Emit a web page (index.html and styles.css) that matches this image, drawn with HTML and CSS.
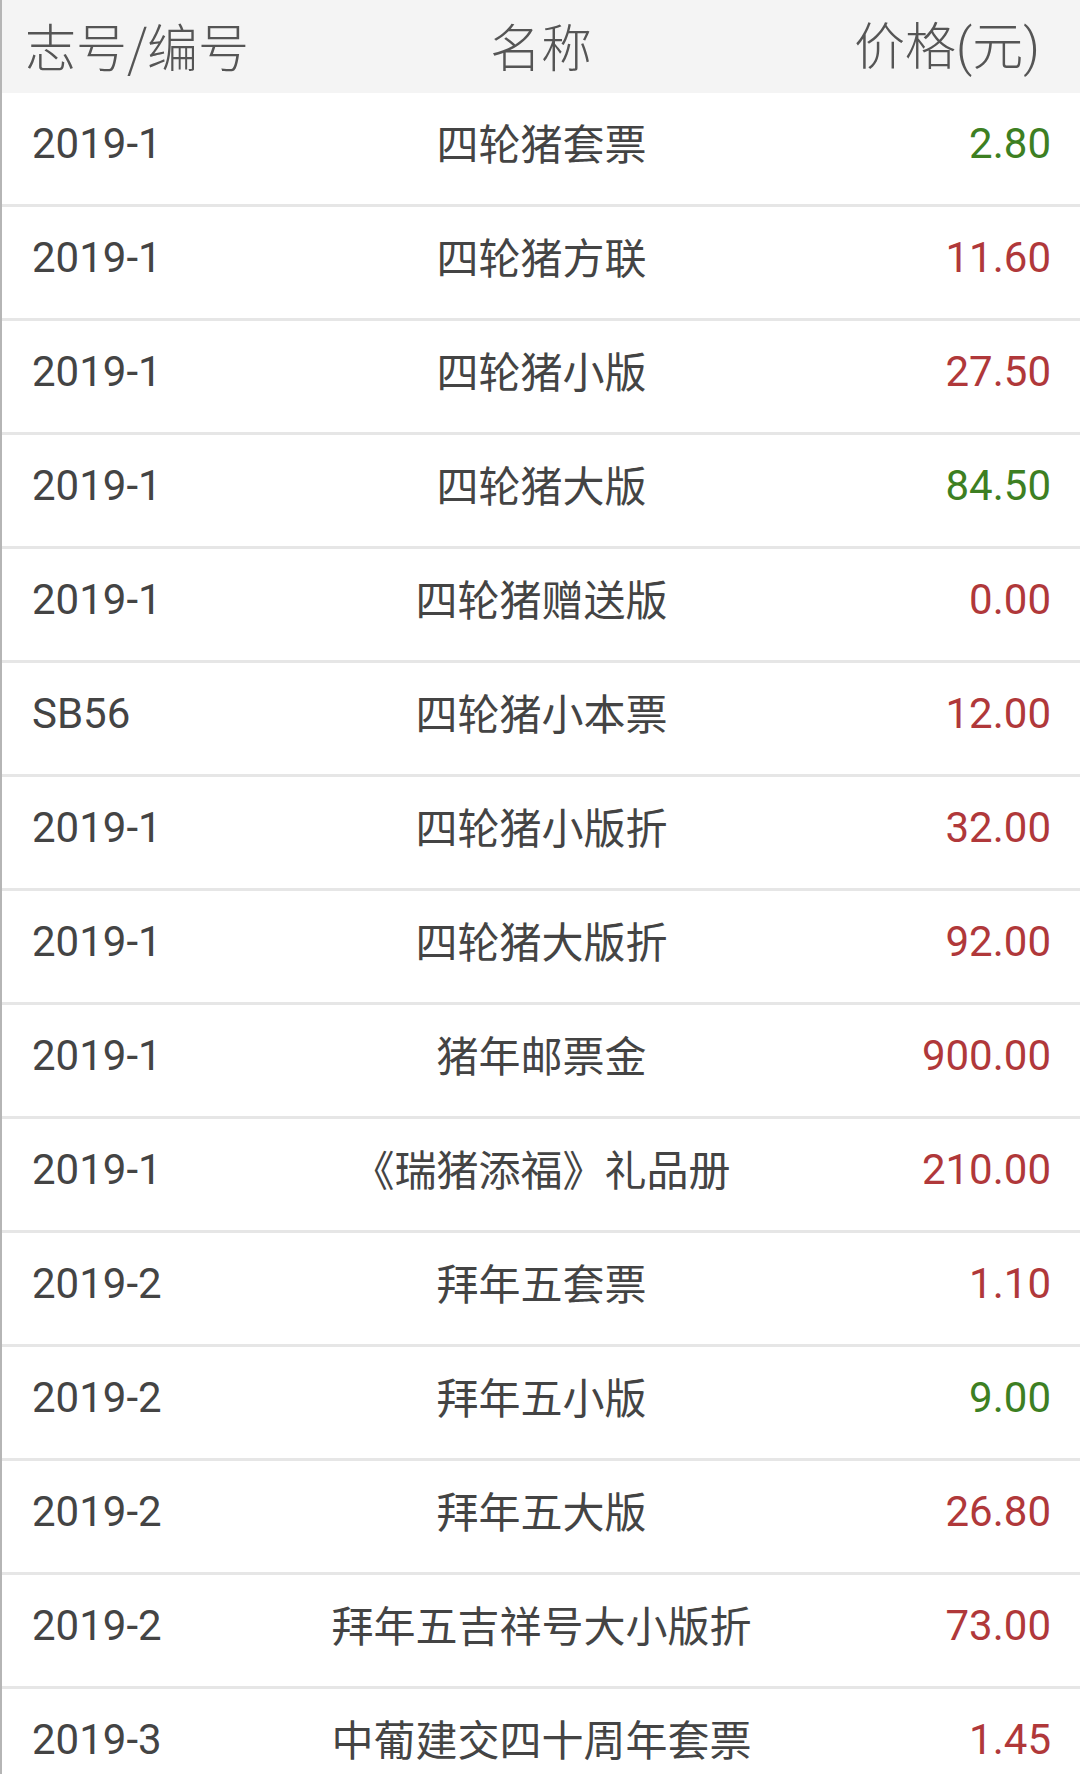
FILE: index.html
```html
<!DOCTYPE html>
<html lang="zh">
<head>
<meta charset="utf-8">
<link rel="stylesheet" href="styles.css">
</head>
<body>
<div class="table">
  <div class="head">
    <div class="c1">志号/编号</div>
    <div class="c2">名称</div>
    <div class="c3">价格<span class="paren">(</span>元<span class="paren">)</span></div>
  </div>
  <div class="row"><div class="c1">2019-1</div><div class="c2">四轮猪套票</div><div class="c3 green">2.80</div></div>
  <div class="row"><div class="c1">2019-1</div><div class="c2">四轮猪方联</div><div class="c3 red">11.60</div></div>
  <div class="row"><div class="c1">2019-1</div><div class="c2">四轮猪小版</div><div class="c3 red">27.50</div></div>
  <div class="row"><div class="c1">2019-1</div><div class="c2">四轮猪大版</div><div class="c3 green">84.50</div></div>
  <div class="row"><div class="c1">2019-1</div><div class="c2">四轮猪赠送版</div><div class="c3 red">0.00</div></div>
  <div class="row"><div class="c1">SB56</div><div class="c2">四轮猪小本票</div><div class="c3 red">12.00</div></div>
  <div class="row"><div class="c1">2019-1</div><div class="c2">四轮猪小版折</div><div class="c3 red">32.00</div></div>
  <div class="row"><div class="c1">2019-1</div><div class="c2">四轮猪大版折</div><div class="c3 red">92.00</div></div>
  <div class="row"><div class="c1">2019-1</div><div class="c2">猪年邮票金</div><div class="c3 red">900.00</div></div>
  <div class="row"><div class="c1">2019-1</div><div class="c2">《瑞猪添福》礼品册</div><div class="c3 red">210.00</div></div>
  <div class="row"><div class="c1">2019-2</div><div class="c2">拜年五套票</div><div class="c3 red">1.10</div></div>
  <div class="row"><div class="c1">2019-2</div><div class="c2">拜年五小版</div><div class="c3 green">9.00</div></div>
  <div class="row"><div class="c1">2019-2</div><div class="c2">拜年五大版</div><div class="c3 red">26.80</div></div>
  <div class="row"><div class="c1">2019-2</div><div class="c2">拜年五吉祥号大小版折</div><div class="c3 red">73.00</div></div>
  <div class="row"><div class="c1">2019-3</div><div class="c2">中葡建交四十周年套票</div><div class="c3 red">1.45</div></div>
</div>
</body>
</html>
```
FILE: styles.css
```css
html, body {
  margin: 0;
  padding: 0;
  background: #ffffff;
}
body {
  width: 1080px;
  height: 1774px;
  overflow: hidden;
  font-family: Roboto, "Noto Sans CJK SC", sans-serif;
  color: #444444;
}
.table {
  border-left: 2px solid #b5b5b5;
}
.head, .row {
  display: grid;
  grid-template-columns: 1fr auto 1fr;
  align-items: center;
}
.row {
  height: 114px;
  box-sizing: border-box;
  border-bottom: 3px solid #e6e6e6;
  font-size: 42px;
  padding: 0 29px 10px 30px;
}
.c1 { justify-self: start; }
.c2 {
  justify-self: center;
  font-family: "Noto Sans CJK SC", sans-serif;
  font-size: 42px;
  padding-bottom: 4px;
}
.c3 { justify-self: end; }
.head {
  height: 93px;
  background: #f4f4f4;
  font-size: 51px;
  color: #555555;
  padding: 0 23px 2px 23px;
  box-sizing: border-box;
}
.head .c1, .head .c2, .head .c3 {
  font-family: "Noto Sans CJK SC", sans-serif;
  font-size: 51px;
  font-weight: 300;
  line-height: 1.2;
  padding-bottom: 0;
}
.head .c3 {
  margin-right: 17px;
}
.head .paren {
  font-family: Roboto, sans-serif;
  font-weight: 300;
}
.green { color: #3d7f22; }
.red { color: #b0383a; }
```
